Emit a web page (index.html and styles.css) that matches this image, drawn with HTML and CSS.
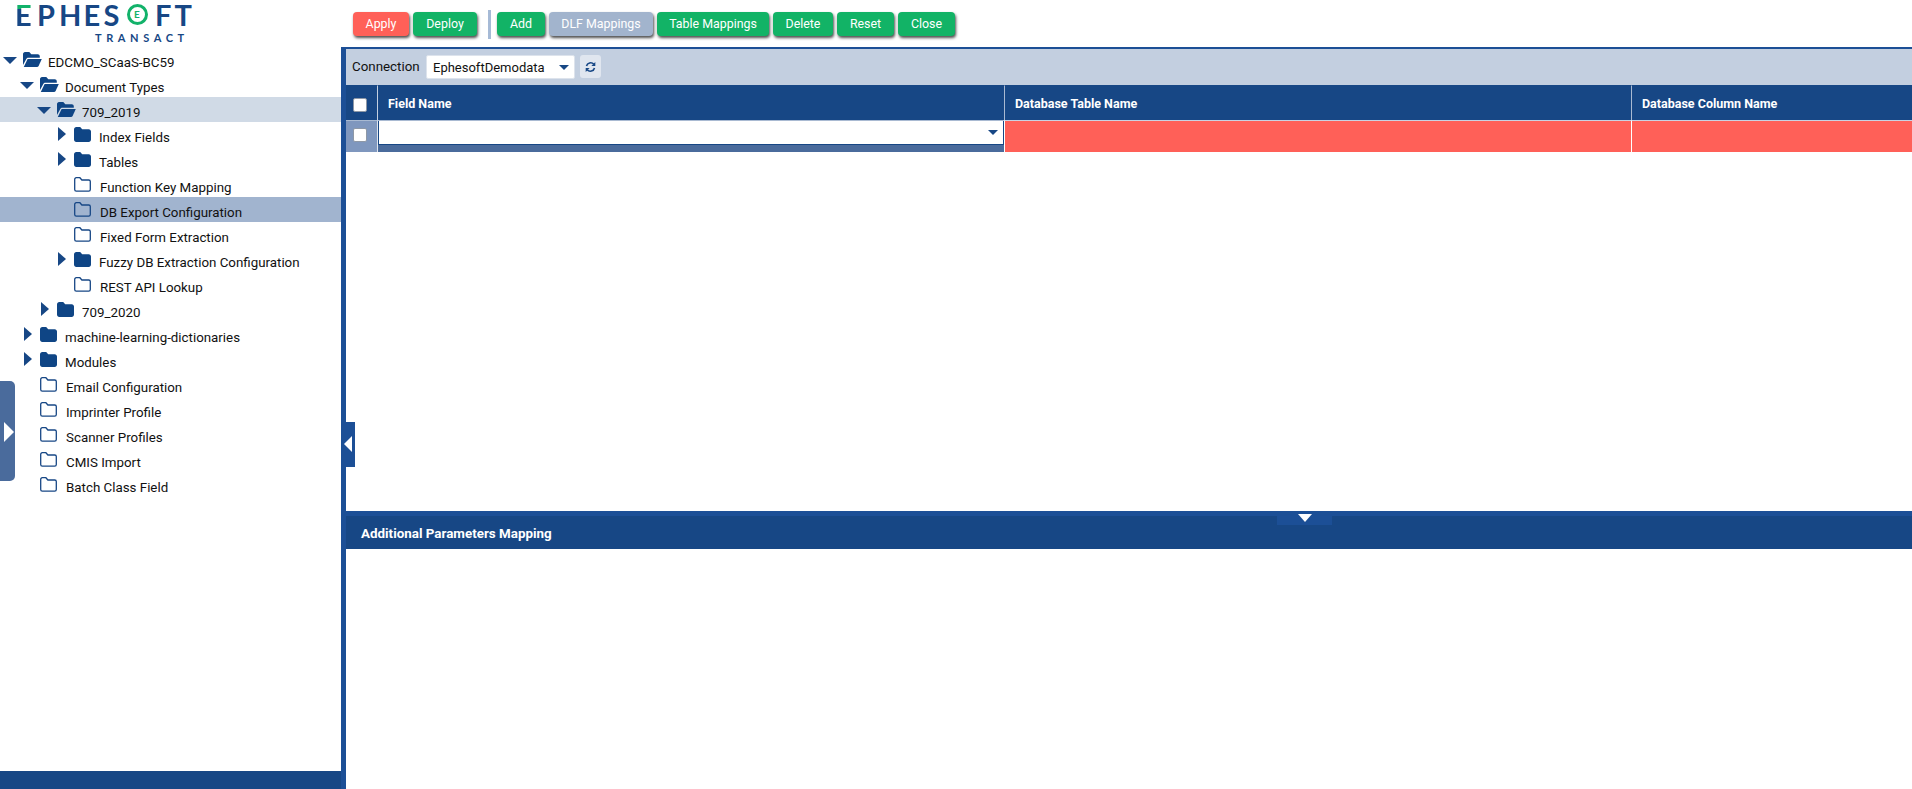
FILE: index.html
```html
<!DOCTYPE html>
<html lang="en">
<head>
<meta charset="utf-8">
<title>Ephesoft Transact</title>
<link rel="stylesheet" href="styles.css">
</head>
<body>
<svg class="defs" width="0" height="0" aria-hidden="true">
  <symbol id="open" viewBox="0 0 19 15"><path d="M0 2.2C0 1 .9 0 2 0h4.3l2 2.2h6.5c1.1 0 2 .9 2 2v1.5H5.4c-1 0-1.7.5-2.1 1.4L0 12.9z"/><path d="M4.6 7h14.2L15.6 14c-.3.6-.9 1-1.6 1H.8z"/></symbol>
  <symbol id="closed" viewBox="0 0 17 15"><path d="M0 2.4C0 1.1 1 0 2.300 0h3.900l2 2.300h6.500C16 2.300 17 3.300 17 4.600v8C17 13.900 16 15 14.700 15H2.300C1 15 0 13.900 0 12.600z"/></symbol>
  <symbol id="outline" viewBox="0 0 17 15"><path d="M.7 2.400C.7 1.500 1.400.7 2.300.7h3.600l2 2.300h6.800c.9 0 1.600.7 1.600 1.600v8c0 .9-.7 1.600-1.600 1.600H2.300c-.9 0-1.600-.7-1.600-1.600z" fill="none" stroke="currentColor" stroke-width="1.300"/></symbol>
</svg>
<div class="app">
  <header class="top">
    <div class="logo">
      <div class="logo-word"><span class="logo-e">E</span><span>P</span><span class="lw-h">H</span><span class="lw-e">E</span><span class="lw-s">S</span><span class="logo-o"><span class="logo-o-e">E</span></span><span class="lw-f">F</span><span>T</span></div>
      <div class="logo-sub">TRANSACT</div>
    </div>
    <div class="toolbar">
      <button class="btn btn-red w-apply">Apply</button>
      <button class="btn btn-green w-deploy">Deploy</button>
      <span class="tool-sep"></span>
      <button class="btn btn-green w-add">Add</button>
      <button class="btn btn-grey w-dlf">DLF Mappings</button>
      <button class="btn btn-green w-table">Table Mappings</button>
      <button class="btn btn-green w-delete">Delete</button>
      <button class="btn btn-green w-reset">Reset</button>
      <button class="btn btn-green w-close">Close</button>
    </div>
  </header>
  <div class="body">
    <aside class="side">
      <ul class="tree">
        <li class="row l0"><span class="caret down"></span><svg class="ico ico-open"><use href="#open"/></svg><span class="lbl">EDCMO_SCaaS-BC59</span></li>
        <li class="row l1"><span class="caret down"></span><svg class="ico ico-open"><use href="#open"/></svg><span class="lbl">Document Types</span></li>
        <li class="row l2 hl-soft"><span class="caret down"></span><svg class="ico ico-open"><use href="#open"/></svg><span class="lbl">709_2019</span></li>
        <li class="row l3"><span class="caret right"></span><svg class="ico"><use href="#closed"/></svg><span class="lbl">Index Fields</span></li>
        <li class="row l3"><span class="caret right"></span><svg class="ico"><use href="#closed"/></svg><span class="lbl">Tables</span></li>
        <li class="row l3"><span class="caret none"></span><svg class="ico"><use href="#outline"/></svg><span class="lbl leaf">Function Key Mapping</span></li>
        <li class="row l3 hl"><span class="caret none"></span><svg class="ico"><use href="#outline"/></svg><span class="lbl leaf">DB Export Configuration</span></li>
        <li class="row l3"><span class="caret none"></span><svg class="ico"><use href="#outline"/></svg><span class="lbl leaf">Fixed Form Extraction</span></li>
        <li class="row l3"><span class="caret right"></span><svg class="ico"><use href="#closed"/></svg><span class="lbl">Fuzzy DB Extraction Configuration</span></li>
        <li class="row l3"><span class="caret none"></span><svg class="ico"><use href="#outline"/></svg><span class="lbl leaf">REST API Lookup</span></li>
        <li class="row l2"><span class="caret right"></span><svg class="ico"><use href="#closed"/></svg><span class="lbl">709_2020</span></li>
        <li class="row l1"><span class="caret right"></span><svg class="ico"><use href="#closed"/></svg><span class="lbl">machine-learning-dictionaries</span></li>
        <li class="row l1"><span class="caret right"></span><svg class="ico"><use href="#closed"/></svg><span class="lbl">Modules</span></li>
        <li class="row l1"><span class="caret none"></span><svg class="ico"><use href="#outline"/></svg><span class="lbl leaf">Email Configuration</span></li>
        <li class="row l1"><span class="caret none"></span><svg class="ico"><use href="#outline"/></svg><span class="lbl leaf">Imprinter Profile</span></li>
        <li class="row l1"><span class="caret none"></span><svg class="ico"><use href="#outline"/></svg><span class="lbl leaf">Scanner Profiles</span></li>
        <li class="row l1"><span class="caret none"></span><svg class="ico"><use href="#outline"/></svg><span class="lbl leaf">CMIS Import</span></li>
        <li class="row l1"><span class="caret none"></span><svg class="ico"><use href="#outline"/></svg><span class="lbl leaf">Batch Class Field</span></li>
      </ul>
      <div class="side-foot"></div>
      <div class="handle-left"><span class="tri-right"></span></div>
    </aside>
    <div class="divider"><div class="handle-mid"><span class="tri-left"></span></div></div>
    <main class="main">
      <div class="conn">
        <span class="conn-label">Connection</span>
        <div class="select"><span>EphesoftDemodata</span><span class="sel-caret"></span></div>
        <button class="refresh" aria-label="Refresh">
          <svg width="11" height="12" viewBox="0 0 11 12"><path d="M1.500 5A4.200 4.200 0 0 1 8.800 3.300" fill="none" stroke="#174785" stroke-width="1.600"/><path d="M10.300 1v4H6.400z" fill="#174785"/><path d="M9.500 7A4.200 4.200 0 0 1 2.200 8.700" fill="none" stroke="#174785" stroke-width="1.600"/><path d="M.7 11V7h3.900z" fill="#174785"/></svg>
        </button>
      </div>
      <div class="grid">
        <div class="th th-check"><span class="cb"></span></div>
        <div class="th">Field Name</div>
        <div class="th">Database Table Name</div>
        <div class="th th-last">Database Column Name</div>
        <div class="td-check"><span class="cb"></span></div>
        <div class="td-field"><div class="field-input"><span class="sel-caret small"></span></div></div>
        <div class="td-red"></div>
        <div class="td-red td-last"></div>
      </div>
      <div class="upper-fill"></div>
      <section class="params">
        <div class="params-head">Additional Parameters Mapping<div class="handle-down"><span class="tri-down"></span></div></div>
      </section>
    </main>
  </div>
</div>
</body>
</html>
```

FILE: styles.css
```css
* { box-sizing: border-box; }
html, body { margin: 0; height: 100%; background: #fff; overflow: hidden; }
body { font-family: Roboto, "Liberation Sans", sans-serif; font-size: 13.330px; color: #111; }
.defs { position: absolute; }
.app { width: 1912px; height: 789px; display: flex; flex-direction: column; }

/* top */
.top { height: 47px; display: flex; flex: none; }
.logo { width: 353px; flex: none; padding: 4px 0 0 15px; }
.logo-word { display: flex; height: 22px; font-family: Lato, sans-serif; font-size: 29px; line-height: 22px; font-weight: 700; color: #174785; }
.logo-word > span { width: 22px; flex: none; }
.logo-word > .lw-h { width: 24.500px; }
.logo-word > .lw-e { width: 20px; }
.logo-word > .lw-s { width: 23px; }
.logo-word > .lw-f { width: 19.500px; }
.logo-word > .logo-e { color: transparent; background: linear-gradient(#12b26a 0 5px, #174785 5px); background-clip: text; -webkit-background-clip: text; }
.logo-word > .logo-o { width: 21px; height: 21px; margin: 0 7.500px 0 0; border: 3.500px solid #12b26a; border-radius: 50%; font-size: 10px; line-height: 14px; text-align: center; color: #12b26a; font-weight: 700; }
.logo-sub { margin: 7px 0 0 80px; font-family: Lato, sans-serif; font-size: 11px; line-height: 10px; font-weight: 700; letter-spacing: 4.600px; color: #174785; }
.toolbar { display: flex; align-items: flex-start; gap: 4px; padding-top: 12px; }
.btn { height: 24px; padding: 0; border: 0; border-radius: 4px; font: 12.400px/24px Roboto, sans-serif; color: #fff; box-shadow: 1px 2px 3px rgba(0,0,0,.7); }
.btn-red { background: #ff6058; }
.btn-green { background: #12b366; }
.btn-grey { background: #a2b4cd; }
.w-apply { width: 56px; } .w-deploy { width: 64px; } .w-add { width: 48px; } .w-dlf { width: 104px; }
.w-table { width: 112px; } .w-delete { width: 60px; } .w-reset { width: 57px; } .w-close { width: 57px; }
.tool-sep { width: 3px; height: 29px; margin: -2px 2px 0 7px; background: #a6bad6; }

/* body */
.body { flex: 1; display: flex; min-height: 0; }
.side { width: 341px; flex: none; display: flex; flex-direction: column; position: relative; }
.tree { flex: 1; margin: 0; padding: 0; list-style: none; }
.row { height: 25px; display: flex; align-items: center; }
.l0 { padding-left: 2px; } .l1 { padding-left: 19px; } .l2 { padding-left: 36px; } .l3 { padding-left: 53px; }
.hl-soft { background: #d0dae6; }
.hl { background: #a1b4cf; }
.caret { width: 21px; height: 15px; flex: none; position: relative; }
.caret.down::before { content: ""; position: absolute; left: 1px; top: 5px; border-top: 7px solid #174785; border-left: 7px solid transparent; border-right: 7px solid transparent; }
.caret.right::before { content: ""; position: absolute; left: 5px; top: 0; border-left: 8px solid #174785; border-top: 7px solid transparent; border-bottom: 7px solid transparent; }
.ico { width: 17px; height: 15px; flex: none; fill: #0f4585; color: #174785; }
.ico-open { width: 19px; }
.lbl { margin-left: 8px; white-space: nowrap; position: relative; top: 3px; }
.ico-open + .lbl { margin-left: 6px; }
.lbl.leaf { margin-left: 9px; }
.side-foot { height: 18px; flex: none; background: #174785; }
.handle-left { position: absolute; left: 0; top: 334px; width: 15px; height: 100px; background: #4a6b9c; border-radius: 0 5px 5px 0; }
.tri-right { position: absolute; left: 4px; top: 41px; border-left: 10px solid #fff; border-top: 10px solid transparent; border-bottom: 10px solid transparent; }

/* divider */
.divider { width: 5px; flex: none; background: #1c4f96; position: relative; }
.handle-mid { position: absolute; left: 0; top: 375px; width: 14px; height: 45px; background: #1c4f96; z-index: 2; }
.tri-left { position: absolute; left: 3px; top: 14px; border-right: 8px solid #fff; border-top: 8px solid transparent; border-bottom: 8px solid transparent; }

/* main */
.main { flex: 1; min-width: 0; display: flex; flex-direction: column; border-top: 2px solid #1c4f96; }
.conn { height: 36px; flex: none; background: #c3cfe0; display: flex; align-items: flex-start; padding: 6px 0 0 6px; }
.conn-label { line-height: 23px; width: 74px; flex: none; }
.select { width: 149px; height: 24px; font-size: 13px; background: #fff; border-radius: 2px; border: 1px solid #dde3ec; display: flex; align-items: center; justify-content: space-between; padding: 0 5px 0 6px; }
.sel-caret { width: 0; height: 0; border-top: 5px solid #174785; border-left: 5px solid transparent; border-right: 5px solid transparent; }
.refresh { width: 21px; height: 23px; margin-left: 5px; padding: 0; border: 0; border-radius: 3px; background: #e0e6ef; display: flex; align-items: center; justify-content: center; }
.grid { display: grid; grid-template-columns: 31px 627px 627px 1fr; grid-template-rows: 35px 32px; flex: none; }
.th { background: #174785; color: #fff; font-weight: 700; font-size: 12.500px; line-height: 35px; padding-left: 10px; border-left: 1px solid #a9bad2; border-top: 1px solid #174785; }
.th-check { padding: 3px 3px 0 0; border-left: 0; display: flex; align-items: center; justify-content: center; }
.th:nth-child(2) { border-left: 1px solid #c3cfe0; }
.cb { width: 14px; height: 14px; background: #fff; border: 1.500px solid #8e98a6; border-radius: 2px; display: block; }
.td-check { background: #7f97be; padding: 0 3px 3px 0; display: flex; align-items: center; justify-content: center; border-top: 1px solid #a9bad2; }
.td-field { background: #4a6b9c; border-top: 1px solid #a9bad2; border-left: 1px solid #dfe5ee; }
.field-input { height: 24px; background: #fff; border: 1px solid #174785; border-top: 0; display: flex; align-items: center; justify-content: flex-end; padding-right: 5px; }
.td-red { background: #ff6058; border-top: 1px solid #c9d3e2; border-left: 1px solid #fff; }
.upper-fill { flex: 1; }
.params { height: 278px; flex: none; border-top: 5px solid #1c4f96; }
.params-head { height: 33px; background: #174785; color: #fff; font-weight: 700; font-size: 13.400px; line-height: 36px; padding-left: 15px; position: relative; }
.handle-down { position: absolute; left: 931px; top: 0; width: 55px; height: 9px; background: #1c4f96; }
.tri-down { position: absolute; left: 21px; top: -2px; border-top: 8px solid #fff; border-left: 7px solid transparent; border-right: 7px solid transparent; }
```
